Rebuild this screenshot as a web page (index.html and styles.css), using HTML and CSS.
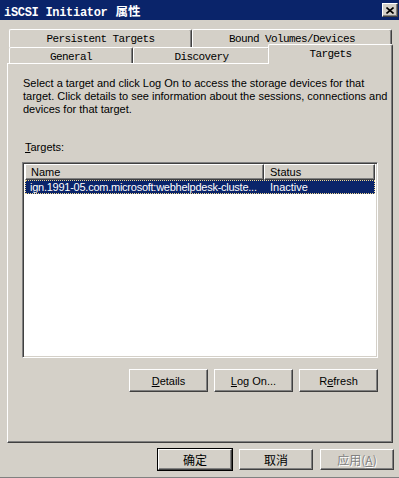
FILE: index.html
```html
<!DOCTYPE html>
<html lang="zh">
<head>
    <meta charset="UTF-8">
    <title>iSCSI Initiator 属性</title>
    <link rel="stylesheet" href="styles.css">
</head>
<body>
    <div class="window">
        <div class="titlebar">
            <span class="title">iSCSI Initiator <span class="title-cjk">属性</span></span>
            <button class="close-btn">
                <svg width="8" height="7" viewBox="0 0 8 7"><path d="M0.5 0.5 L7.5 6.5 M7.5 0.5 L0.5 6.5" stroke="#000" stroke-width="1.6" fill="none"/></svg>
            </button>
        </div>

        <div class="sheet">
            <!-- Tab rows -->
            <div class="tab-row row-back">
                <div class="tab tab-persistent">Persistent Targets</div>
                <div class="tab tab-bound">Bound Volumes/Devices</div>
            </div>
            <div class="tab-row row-front">
                <div class="tab tab-general">General</div>
                <div class="tab tab-discovery">Discovery</div>
                <div class="tab tab-targets active">Targets</div>
            </div>

            <div class="panel">
                <p class="intro">Select a target and click Log On to access the storage devices for that target. Click details to see information about the sessions, connections and devices for that target.</p>
                <div class="field-label"><u>T</u>argets:</div>

                <div class="listview">
                    <div class="lv-header">
                        <div class="lv-col col-name">Name</div>
                        <div class="lv-col col-status">Status</div>
                    </div>
                    <div class="lv-row selected">
                        <span class="cell-name">ign.1991-05.com.microsoft:webhelpdesk-cluste...</span>
                        <span class="cell-status">Inactive</span>
                    </div>
                </div>

                <div class="panel-buttons">
                    <button class="btn"><u>D</u>etails</button>
                    <button class="btn"><u>L</u>og On...</button>
                    <button class="btn">R<u>e</u>fresh</button>
                </div>
            </div>
        </div>

        <!-- Dialog buttons -->
        <div class="dialog-buttons">
            <button class="btn btn-cjk btn-default">确定</button>
            <button class="btn btn-cjk">取消</button>
            <button class="btn btn-cjk btn-disabled">应用(<u>A</u>)</button>
        </div>
    </div>
</body>
</html>
```

FILE: styles.css
```css
body {
    margin: 0;
    padding: 0;
    background: #d4d0c8;
    font-family: "Liberation Sans", Arial, sans-serif;
    font-size: 11px;
    color: #000;
}

.window {
    width: 399px;
    height: 478px;
    box-sizing: border-box;
    background: #d4d0c8;
    border-bottom: 1px solid #808080;
    display: flex;
    flex-direction: column;
}

.titlebar {
    height: 20px;
    background: #0a246a;
    display: flex;
    align-items: center;
    justify-content: space-between;
    padding: 0 1px 0 4px;
}

.title {
    color: #fff;
    font-family: "Liberation Mono", "Noto Sans CJK SC", monospace;
    font-weight: bold;
    font-size: 12px;
    letter-spacing: -0.3px;
}

.title-cjk {
    font-family: "Noto Sans CJK SC", sans-serif;
    font-size: 12.5px;
    letter-spacing: 0;
    margin-left: 1px;
}

.close-btn {
    width: 16px;
    height: 14px;
    padding: 0;
    box-sizing: border-box;
    background: #d4d0c8;
    border: 1px solid;
    border-color: #fff #404040 #404040 #fff;
    box-shadow: inset -1px -1px #808080;
    display: flex;
    align-items: center;
    justify-content: center;
}

.sheet {
    padding: 9px 6px 0 7px;
}

.tab-row {
    display: flex;
    align-items: flex-start;
    padding-left: 2px;
    font-family: "Liberation Mono", monospace;
    font-size: 11px;
    letter-spacing: -0.6px;
}

.row-back {
    height: 18px;
}

.row-front {
    height: 16px;
}

.tab {
    box-sizing: border-box;
    background: #d4d0c8;
    border-top: 1px solid #fff;
    border-left: 1px solid #fff;
    border-right: 1px solid #404040;
    border-top-left-radius: 2px;
    border-top-right-radius: 2px;
    box-shadow: inset -1px 0 #808080;
    text-align: center;
}

.row-back .tab {
    height: 18px;
    line-height: 18px;
}

.row-front .tab {
    height: 16px;
    line-height: 16px;
    padding-top: 1px;
}

.tab-persistent { width: 183px; }
.tab-bound { width: 200px; }
.tab-general { width: 124px; }
.tab-discovery { width: 137px; }

.row-front .tab-targets {
    width: 125px;
    height: 20px;
    line-height: 18px;
    padding-top: 0;
    margin: -3px 0 -1px -2px;
    position: relative;
    z-index: 1;
}

.panel {
    height: 380px;
    box-sizing: border-box;
    border: 1px solid;
    border-color: #fff #404040 #404040 #fff;
    box-shadow: inset -1px -1px #808080;
    padding: 13px 14px 0 15px;
}

.intro {
    margin: 0 -14px 0 0;
    line-height: 13px;
}

.field-label {
    margin-top: 25px;
    line-height: 13px;
    margin-left: 2px;
}

.listview {
    margin: 8px 0 0 -1px;
    height: 196px;
    box-sizing: border-box;
    background: #fff;
    border: 1px solid;
    border-color: #808080 #fff #fff #808080;
    box-shadow: inset 1px 1px #404040, inset -1px -1px #d4d0c8;
    padding: 1px 2px 2px 2px;
}

.lv-header {
    display: flex;
    height: 16px;
}

.lv-col {
    box-sizing: border-box;
    background: #d4d0c8;
    border: 1px solid;
    border-color: #fff #404040 #404040 #fff;
    box-shadow: inset -1px -1px #808080;
    line-height: 14px;
    padding-left: 5px;
}

.col-name { width: 239px; }
.col-status { flex: 1; }

.lv-row {
    display: flex;
    height: 14px;
    line-height: 14px;
}

.lv-row.selected {
    background: #0a246a;
    color: #fff;
    outline: 1px dotted #f0d890;
    outline-offset: -1px;
}

.cell-name {
    width: 239px;
    padding-left: 5px;
    box-sizing: border-box;
    white-space: nowrap;
    letter-spacing: -0.25px;
}

.cell-status {
    padding-left: 6px;
}

.panel-buttons {
    display: flex;
    justify-content: flex-end;
    gap: 6px;
    margin-top: 11px;
}

.btn {
    width: 79px;
    height: 23px;
    box-sizing: border-box;
    background: #d4d0c8;
    border: 1px solid;
    border-color: #fff #404040 #404040 #fff;
    box-shadow: inset -1px -1px #808080;
    font-family: "Liberation Sans", Arial, sans-serif;
    font-size: 11px;
    color: #000;
    padding: 0;
}

.dialog-buttons {
    display: flex;
    justify-content: flex-end;
    gap: 7px;
    margin-top: 6px;
    padding-right: 5px;
}

.btn-cjk {
    width: 74px;
    height: 21px;
    font-family: "Noto Sans CJK SC", sans-serif;
    font-size: 12px;
}

.btn-default {
    outline: 1px solid #000;
    outline-offset: 0;
}

.btn-disabled {
    color: #808080;
    text-shadow: 1px 1px #fff;
}
```
